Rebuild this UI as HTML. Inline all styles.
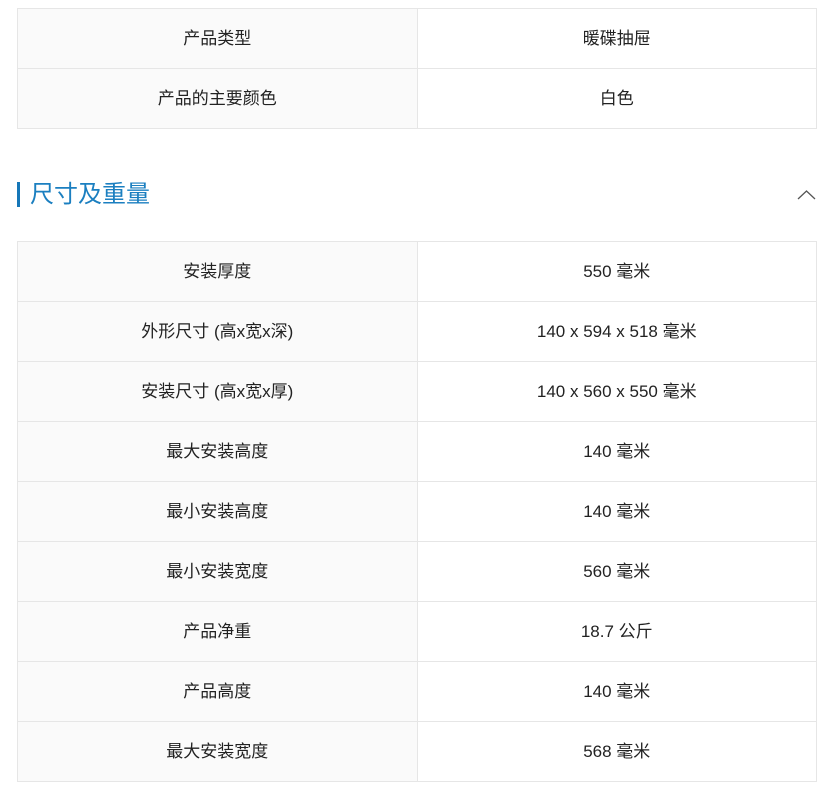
<!DOCTYPE html><html><head><meta charset="utf-8"><style>
body{margin:0;background:#fff;font-family:"Liberation Sans","Noto Sans CJK SC",sans-serif;color:#222;width:828px;height:795px;overflow:hidden;position:relative}
table{position:absolute;left:17px;width:800px;border-collapse:collapse;font-size:17px}
td{height:55px;border:1px solid #e6e6e6;text-align:center;width:50%;padding:0 0 4px 0}
td:first-child{background:#fafafa}
h2{position:absolute;left:30px;top:180px;margin:0;font-weight:normal;font-size:24px;color:#1b7fc0;line-height:30px;height:30px}
.bar{position:absolute;left:17px;top:182px;width:3px;height:25px;background:#1677b8}
</style></head><body>
<table style="top:8px"><tr><td>产品类型</td><td>暖碟抽屉</td></tr><tr><td>产品的主要颜色</td><td>白色</td></tr></table>
<div class="bar"></div><h2>尺寸及重量</h2>
<svg style="position:absolute;left:797px;top:189px" width="20" height="12"><path d="M1 10 L9.5 2 L18 10" fill="none" stroke="#555" stroke-width="1.3"/></svg>
<table style="top:241px"><tr><td>安装厚度</td><td>550 毫米</td></tr><tr><td>外形尺寸 (高x宽x深)</td><td>140 x 594 x 518 毫米</td></tr><tr><td>安装尺寸 (高x宽x厚)</td><td>140 x 560 x 550 毫米</td></tr><tr><td>最大安装高度</td><td>140 毫米</td></tr><tr><td>最小安装高度</td><td>140 毫米</td></tr><tr><td>最小安装宽度</td><td>560 毫米</td></tr><tr><td>产品净重</td><td>18.7 公斤</td></tr><tr><td>产品高度</td><td>140 毫米</td></tr><tr><td>最大安装宽度</td><td>568 毫米</td></tr></table>
</body></html>
